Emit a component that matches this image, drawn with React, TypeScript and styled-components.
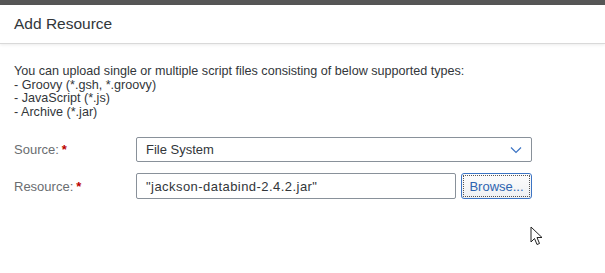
import React from 'react';
import styled, { createGlobalStyle } from 'styled-components';

const GlobalStyle = createGlobalStyle`
  html, body {
    margin: 0;
    padding: 0;
    background: #ffffff;
  }
  body {
    font-family: "Liberation Sans", Arial, sans-serif;
  }
`;

const Page = styled.div`
  position: relative;
  width: 605px;
  height: 273px;
  overflow: hidden;
  background: #ffffff;
`;

const TopBar = styled.div`
  height: 5px;
  background: #565656;
`;

const Header = styled.div`
  height: 38px;
  display: flex;
  align-items: center;
  padding-left: 14px;
  border-bottom: 1px solid #d9d9d9;
  box-shadow: 0 1px 3px rgba(0, 0, 0, 0.08);
  font-size: 15.5px;
  color: #32363a;
`;

const Body = styled.div`
  padding: 21px 14px 0 14px;
`;

const Info = styled.div`
  font-size: 12.6px;
  line-height: 13.5px;
  color: #32363a;
`;

const Form = styled.div`
  margin-top: 18px;
  display: grid;
  grid-template-columns: 122px 396px;
  row-gap: 11px;
  align-items: center;
`;

const Label = styled.div`
  font-size: 13px;
  color: #6a6d70;
`;

const Required = styled.span`
  color: #bb0000;
  margin-left: 3px;
  font-weight: bold;
`;

const Field = styled.div<{ $spacing?: number }>`
  height: 26px;
  box-sizing: border-box;
  border: 1px solid #89919a;
  border-radius: 2px;
  display: flex;
  align-items: center;
  padding: 0 9px;
  font-size: 13px;
  letter-spacing: ${(p) => p.$spacing ?? 0}px;
  color: #32363a;
  background: #ffffff;
`;

const Select = styled(Field)`
  height: 25px;
  justify-content: space-between;
`;

const ResourceRow = styled.div`
  display: flex;
  gap: 5px;
`;

const TextInput = styled(Field)`
  flex: 1;
`;

const BrowseButton = styled.button`
  width: 71px;
  height: 26px;
  box-sizing: border-box;
  border: 1px solid #3c74c4;
  border-radius: 3px;
  background: linear-gradient(#fdfdfd, #eef0f3);
  color: #2e64b0;
  font-family: "Liberation Sans", Arial, sans-serif;
  font-size: 13px;
  padding: 0;
  outline: 1px dotted #555;
  outline-offset: -3px;
`;

const Cursor = styled.svg`
  position: absolute;
  left: 530px;
  top: 226px;
`;

export default function App() {
  return (
    <Page>
      <GlobalStyle />
      <TopBar />
      <Header>Add Resource</Header>
      <Body>
        <Info>
          You can upload single or multiple script files consisting of below supported types:
          <br />- Groovy (*.gsh, *.groovy)
          <br />- JavaScript (*.js)
          <br />- Archive (*.jar)
        </Info>
        <Form>
          <Label>
            Source:<Required>*</Required>
          </Label>
          <Select>
            <span>File System</span>
            <svg width="12" height="8" viewBox="0 0 12 8">
              <path d="M1 1.5 L6 6.5 L11 1.5" fill="none" stroke="#3c74c4" strokeWidth="1.2" />
            </svg>
          </Select>
          <Label>
            Resource:<Required>*</Required>
          </Label>
          <ResourceRow>
            <TextInput $spacing={0.45}>"jackson-databind-2.4.2.jar"</TextInput>
            <BrowseButton>Browse...</BrowseButton>
          </ResourceRow>
        </Form>
      </Body>
      <Cursor width="14" height="22" viewBox="0 0 14 22">
        <path
          d="M1 1 L1 16 L4.5 12.5 L7 18.5 L9.5 17.5 L7 11.5 L12 11.5 Z"
          fill="#ffffff"
          stroke="#222"
          strokeWidth="1"
          strokeLinejoin="round"
        />
      </Cursor>
    </Page>
  );
}
